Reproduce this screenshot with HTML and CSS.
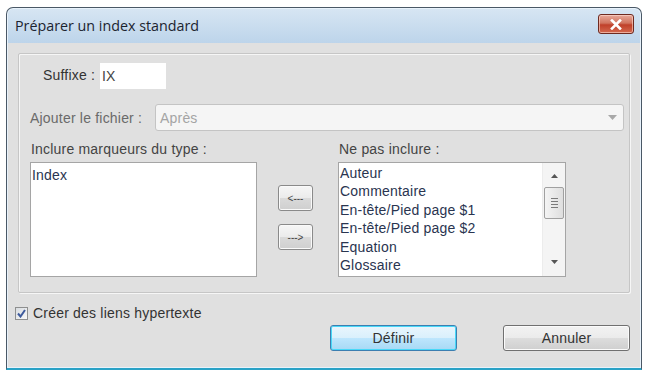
FILE: index.html
```html
<!DOCTYPE html>
<html lang="fr">
<head>
    <meta charset="UTF-8">
    <title>Préparer un index standard</title>
    <link rel="stylesheet" href="styles.css">
</head>
<body>
    <div class="window">
        <div class="title-bar">
            <span class="title">Préparer un index standard</span>
            <button class="close-btn" aria-label="Fermer">
                <svg width="14" height="11" viewBox="0 0 14 11">
                    <path d="M3 1.5 L11 9.5 M11 1.5 L3 9.5" stroke="#fff" stroke-width="2.6" stroke-linecap="square"/>
                </svg>
            </button>
        </div>
        <div class="content">
            <div class="group">
                <div class="row suffix-row">
                    <label for="suffix">Suffixe :</label>
                    <input type="text" id="suffix" class="text-input" value="IX">
                </div>
                <div class="row file-row">
                    <label>Ajouter le fichier :</label>
                    <div class="combo">
                        <span>Après</span>
                        <svg width="9" height="5" viewBox="0 0 9 5"><path d="M0 0 L9 0 L4.5 5 Z" fill="#a8a8a8"/></svg>
                    </div>
                </div>
                <div class="lists">
                    <div class="list-col">
                        <div class="list-label">Inclure marqueurs du type :</div>
                        <div class="listbox left-list">
                            <div>Index</div>
                        </div>
                    </div>
                    <div class="move-btns">
                        <button class="small-btn">&lt;---</button>
                        <button class="small-btn">---&gt;</button>
                    </div>
                    <div class="list-col right-col">
                        <div class="list-label">Ne pas inclure :</div>
                        <div class="listbox right-list">
                            <div class="items">
                                <div>Auteur</div>
                                <div>Commentaire</div>
                                <div>En-tête/Pied page $1</div>
                                <div>En-tête/Pied page $2</div>
                                <div>Equation</div>
                                <div>Glossaire</div>
                            </div>
                            <div class="scrollbar">
                                <svg width="7" height="4" viewBox="0 0 7 4"><path d="M0 4 L7 4 L3.5 0 Z" fill="#555"/></svg>
                                <div class="thumb">
                                    <span></span><span></span><span></span><span></span>
                                </div>
                                <div class="track"></div>
                                <svg width="7" height="4" viewBox="0 0 7 4"><path d="M0 0 L7 0 L3.5 4 Z" fill="#555"/></svg>
                            </div>
                        </div>
                    </div>
                </div>
            </div>
            <label class="check-row">
                <span class="checkbox">
                    <svg width="9" height="9" viewBox="0 0 9 9"><path d="M1 4.5 L3.5 7.5 L8 1" stroke="#3d5a9c" stroke-width="2" fill="none"/></svg>
                </span>
                Créer des liens hypertexte
            </label>
            <div class="footer">
                <button class="btn btn-default">Définir</button>
                <button class="btn">Annuler</button>
            </div>
        </div>
    </div>
</body>
</html>
```

FILE: styles.css
```css
body {
    margin: 0;
    background: #ffffff;
    font-family: "Liberation Sans", Arial, sans-serif;
    font-size: 14px;
    letter-spacing: 0.2px;
    color: #333;
}

.window {
    margin: 7px 3px 0 6px;
    height: 363px;
    border: 1px solid #4a5866;
    border-bottom: 2px solid #2aa2c6;
    border-radius: 7px 7px 0 0;
    background: linear-gradient(to bottom, #d7e6f3, #bcd4ea 36px, #c8dbee);
    box-shadow: inset 0 0 0 1px #e8f2fb;
    display: flex;
    flex-direction: column;
    box-sizing: border-box;
}

.title-bar {
    height: 35px;
    display: flex;
    align-items: center;
    justify-content: space-between;
    padding: 0 7px 0 8px;
}

.title {
    font-family: "Open Sans", "Noto Sans", sans-serif;
    font-size: 14.3px;
    letter-spacing: 0;
    color: #1c2430;
    margin-top: -1px;
}

.close-btn {
    width: 36px;
    height: 20px;
    margin-top: -3px;
    border: 1px solid #6e2a20;
    border-radius: 3px;
    background: linear-gradient(to bottom, #e8a99a, #d1745f 45%, #c0402a 55%, #d46a50);
    box-shadow: inset 0 0 0 1px rgba(255, 220, 210, 0.6);
    display: flex;
    align-items: center;
    justify-content: center;
    padding: 0;
}

.content {
    flex: 1;
    margin: 0 1px 1px 1px;
    background: #e0e0e0;
    padding: 10px 10px 0 10px;
    display: flex;
    flex-direction: column;
}

.group {
    height: 240px;
    border: 1px solid #c6c6c6;
    box-shadow: inset 1px 1px 0 #f6f6f6, 1px 1px 0 #f6f6f6;
    border-radius: 2px;
    padding: 9px 5px 0 11px;
    box-sizing: border-box;
}

.row {
    display: flex;
    align-items: center;
}

.suffix-row {
    padding-left: 13px;
}

.suffix-row label {
    width: 57px;
    margin-top: -3px;
}

.text-input {
    width: 66px;
    height: 26px;
    box-sizing: border-box;
    border: none;
    background: #fff;
    font: inherit;
    letter-spacing: 0.2px;
    padding: 0 2px;
    color: #444;
}

.file-row {
    margin-top: 15px;
}

.file-row label {
    width: 125px;
    color: #6a6a6a;
}

.combo {
    flex: 1;
    height: 27px;
    box-sizing: border-box;
    border: 1px solid #c4c4c4;
    border-radius: 3px;
    background: #f5f5f5;
    display: flex;
    align-items: center;
    justify-content: space-between;
    padding: 0 6px 0 4px;
    color: #a4a4a4;
}

.lists {
    display: flex;
    margin-top: 10px;
}

.list-label {
    color: #444;
    height: 21px;
    line-height: 16px;
    padding-left: 1px;
}

.listbox {
    height: 115px;
    box-sizing: border-box;
    border: 1px solid #a5a5a5;
    background: #fff;
    color: #2a3550;
    line-height: 18.4px;
}

.left-list {
    width: 227px;
    padding: 3px 1px;
}

.move-btns {
    display: flex;
    flex-direction: column;
    gap: 13px;
    margin: 44px 0 0 21px;
}

.small-btn {
    width: 35px;
    height: 26px;
    border: 1px solid #8a8a8a;
    border-radius: 3px;
    background: linear-gradient(to bottom, #f6f6f6, #ebebeb 50%, #dadada 50%, #cfcfcf);
    box-shadow: inset 0 0 0 1px #fafafa;
    font-family: "Liberation Sans", Arial, sans-serif;
    font-size: 10px;
    color: #444;
    padding: 0;
    letter-spacing: 0;
}

.right-col {
    margin-left: 25px;
}

.right-list {
    width: 228px;
    display: flex;
}

.items {
    flex: 1;
    padding: 1px 1px 0 1px;
    overflow: hidden;
}

.scrollbar {
    width: 23px;
    background: #f4f4f4;
    border-left: 1px solid #ececec;
    display: flex;
    flex-direction: column;
    align-items: center;
    padding: 11px 0 12px;
    box-sizing: border-box;
}

.thumb {
    width: 20px;
    height: 32px;
    margin-top: 9px;
    box-sizing: border-box;
    border: 1px solid #a0a0a0;
    border-radius: 2px;
    background: linear-gradient(to right, #f4f4f4, #dedede);
    display: flex;
    flex-direction: column;
    align-items: center;
    justify-content: center;
    gap: 2px;
}

.thumb span {
    width: 7px;
    height: 1px;
    background: #7a7a7a;
}

.track {
    flex: 1;
}

.check-row {
    display: flex;
    align-items: center;
    gap: 5px;
    margin: 12px 0 0 -3px;
}

.checkbox {
    width: 13px;
    height: 13px;
    box-sizing: border-box;
    border: 1px solid #8e8f8f;
    background: linear-gradient(135deg, #d8dce0, #f8f8f8);
    display: flex;
    align-items: center;
    justify-content: center;
}

.footer {
    display: flex;
    justify-content: flex-end;
    gap: 46px;
    margin-top: 4px;
}

.btn {
    width: 127px;
    height: 26px;
    border: 1px solid #707070;
    border-radius: 3px;
    background: linear-gradient(to bottom, #f2f2f2, #ebebeb 50%, #dddddd 50%, #cfcfcf);
    box-shadow: inset 0 0 0 1px #fbfbfb;
    font-family: "Liberation Sans", Arial, sans-serif;
    font-size: 14px;
    letter-spacing: 0.2px;
    color: #333;
}

.btn-default {
    border-color: #3c7fb1;
    background: linear-gradient(to bottom, #eaf6fd, #d9f0fc 50%, #bee6fd 50%, #a7d9f5);
    box-shadow: inset 0 0 0 1px #48d8f8;
}
```
